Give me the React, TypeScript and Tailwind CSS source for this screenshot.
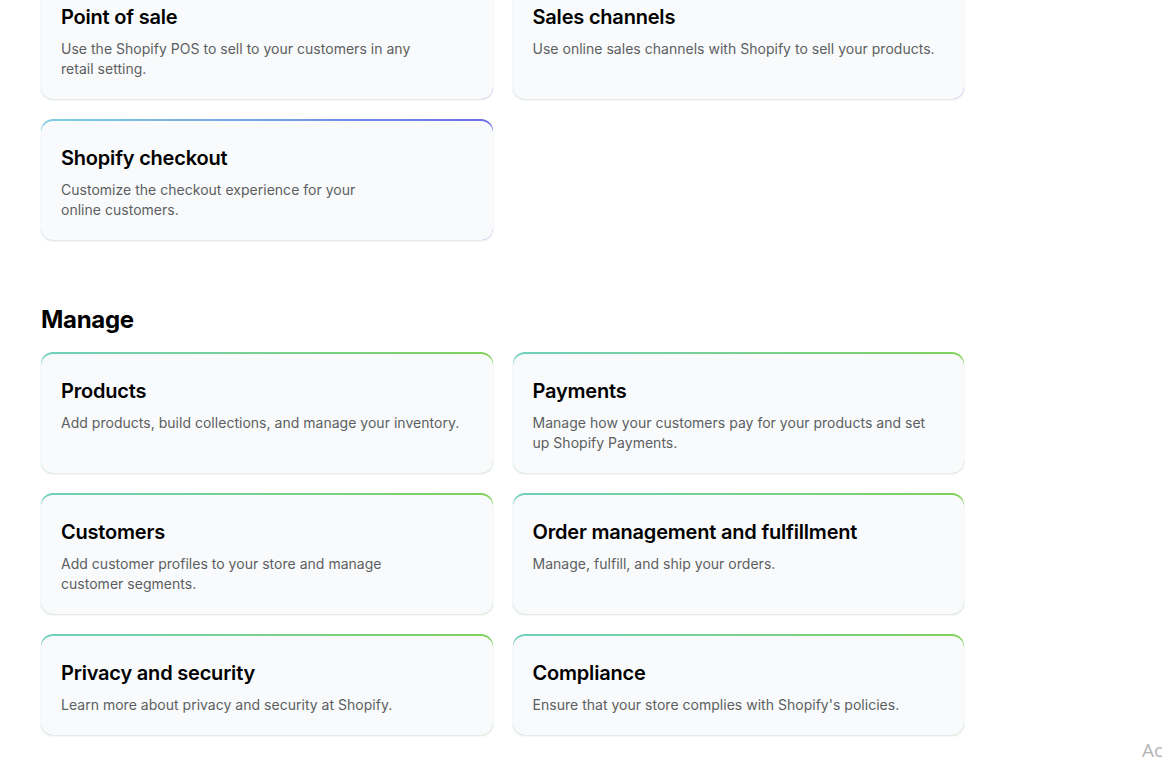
import React from 'react'

type Card = {
  title: string
  lines: string[]
}

const sell: Card[] = [
  {
    title: 'Point of sale',
    lines: ['Use the Shopify POS to sell to your customers in any', 'retail setting.'],
  },
  {
    title: 'Sales channels',
    lines: ['Use online sales channels with Shopify to sell your products.'],
  },
  {
    title: 'Shopify checkout',
    lines: ['Customize the checkout experience for your', 'online customers.'],
  },
]

const manage: Card[] = [
  { title: 'Products', lines: ['Add products, build collections, and manage your inventory.'] },
  {
    title: 'Payments',
    lines: ['Manage how your customers pay for your products and set', 'up Shopify Payments.'],
  },
  {
    title: 'Customers',
    lines: ['Add customer profiles to your store and manage', 'customer segments.'],
  },
  { title: 'Order management and fulfillment', lines: ['Manage, fulfill, and ship your orders.'] },
  { title: 'Privacy and security', lines: ['Learn more about privacy and security at Shopify.'] },
  { title: 'Compliance', lines: ["Ensure that your store complies with Shopify's policies."] },
]

function GuideCard({ card, tone }: { card: Card; tone: 'sell' | 'manage' }) {
  const edge =
    tone === 'sell'
      ? 'bg-gradient-to-r from-[#7fd0e0] to-[#6c6ce8]'
      : 'bg-gradient-to-r from-[#6fd1bb] to-[#80d159]'
  return (
    <a href="#" className={`block rounded-xl pt-[2px] shadow-[0_1px_2px_rgba(0,0,0,0.12)] ${edge}`}>
      <div className="h-full rounded-xl bg-[#f9fafb] px-5 pt-[23px] pb-5">
        <h3 className="text-xl leading-7 font-semibold tracking-[-0.2px] text-black">{card.title}</h3>
        <p className="mt-2 text-sm leading-5 tracking-[0.02px] text-[#5c5f62]">
          {card.lines.map((l, i) => (
            <span key={i} className="block">
              {l}
            </span>
          ))}
        </p>
      </div>
    </a>
  )
}

export default function App() {
  return (
    <div
      className="relative h-[766px] overflow-hidden bg-white"
      style={{ fontFamily: 'Inter, "Noto Sans", sans-serif' }}
    >
      <div className="-mt-[22px] ml-[41px] w-[923px]">
        <div className="grid grid-cols-2 gap-5">
          {sell.map((c) => (
            <GuideCard key={c.title} card={c} tone="sell" />
          ))}
        </div>

        <h2 className="mt-16 mb-4 text-2xl leading-8 font-bold tracking-[-0.3px] text-black">Manage</h2>
        <div className="grid grid-cols-2 gap-5">
          {manage.map((c) => (
            <GuideCard key={c.title} card={c} tone="manage" />
          ))}
        </div>
      </div>

      <span
        className="absolute top-[736px] left-[1142px] whitespace-nowrap text-[19px] leading-7 text-[#b4b4b4]"
        style={{ fontFamily: '"Open Sans", sans-serif' }}
      >
        Ac
      </span>
    </div>
  )
}
